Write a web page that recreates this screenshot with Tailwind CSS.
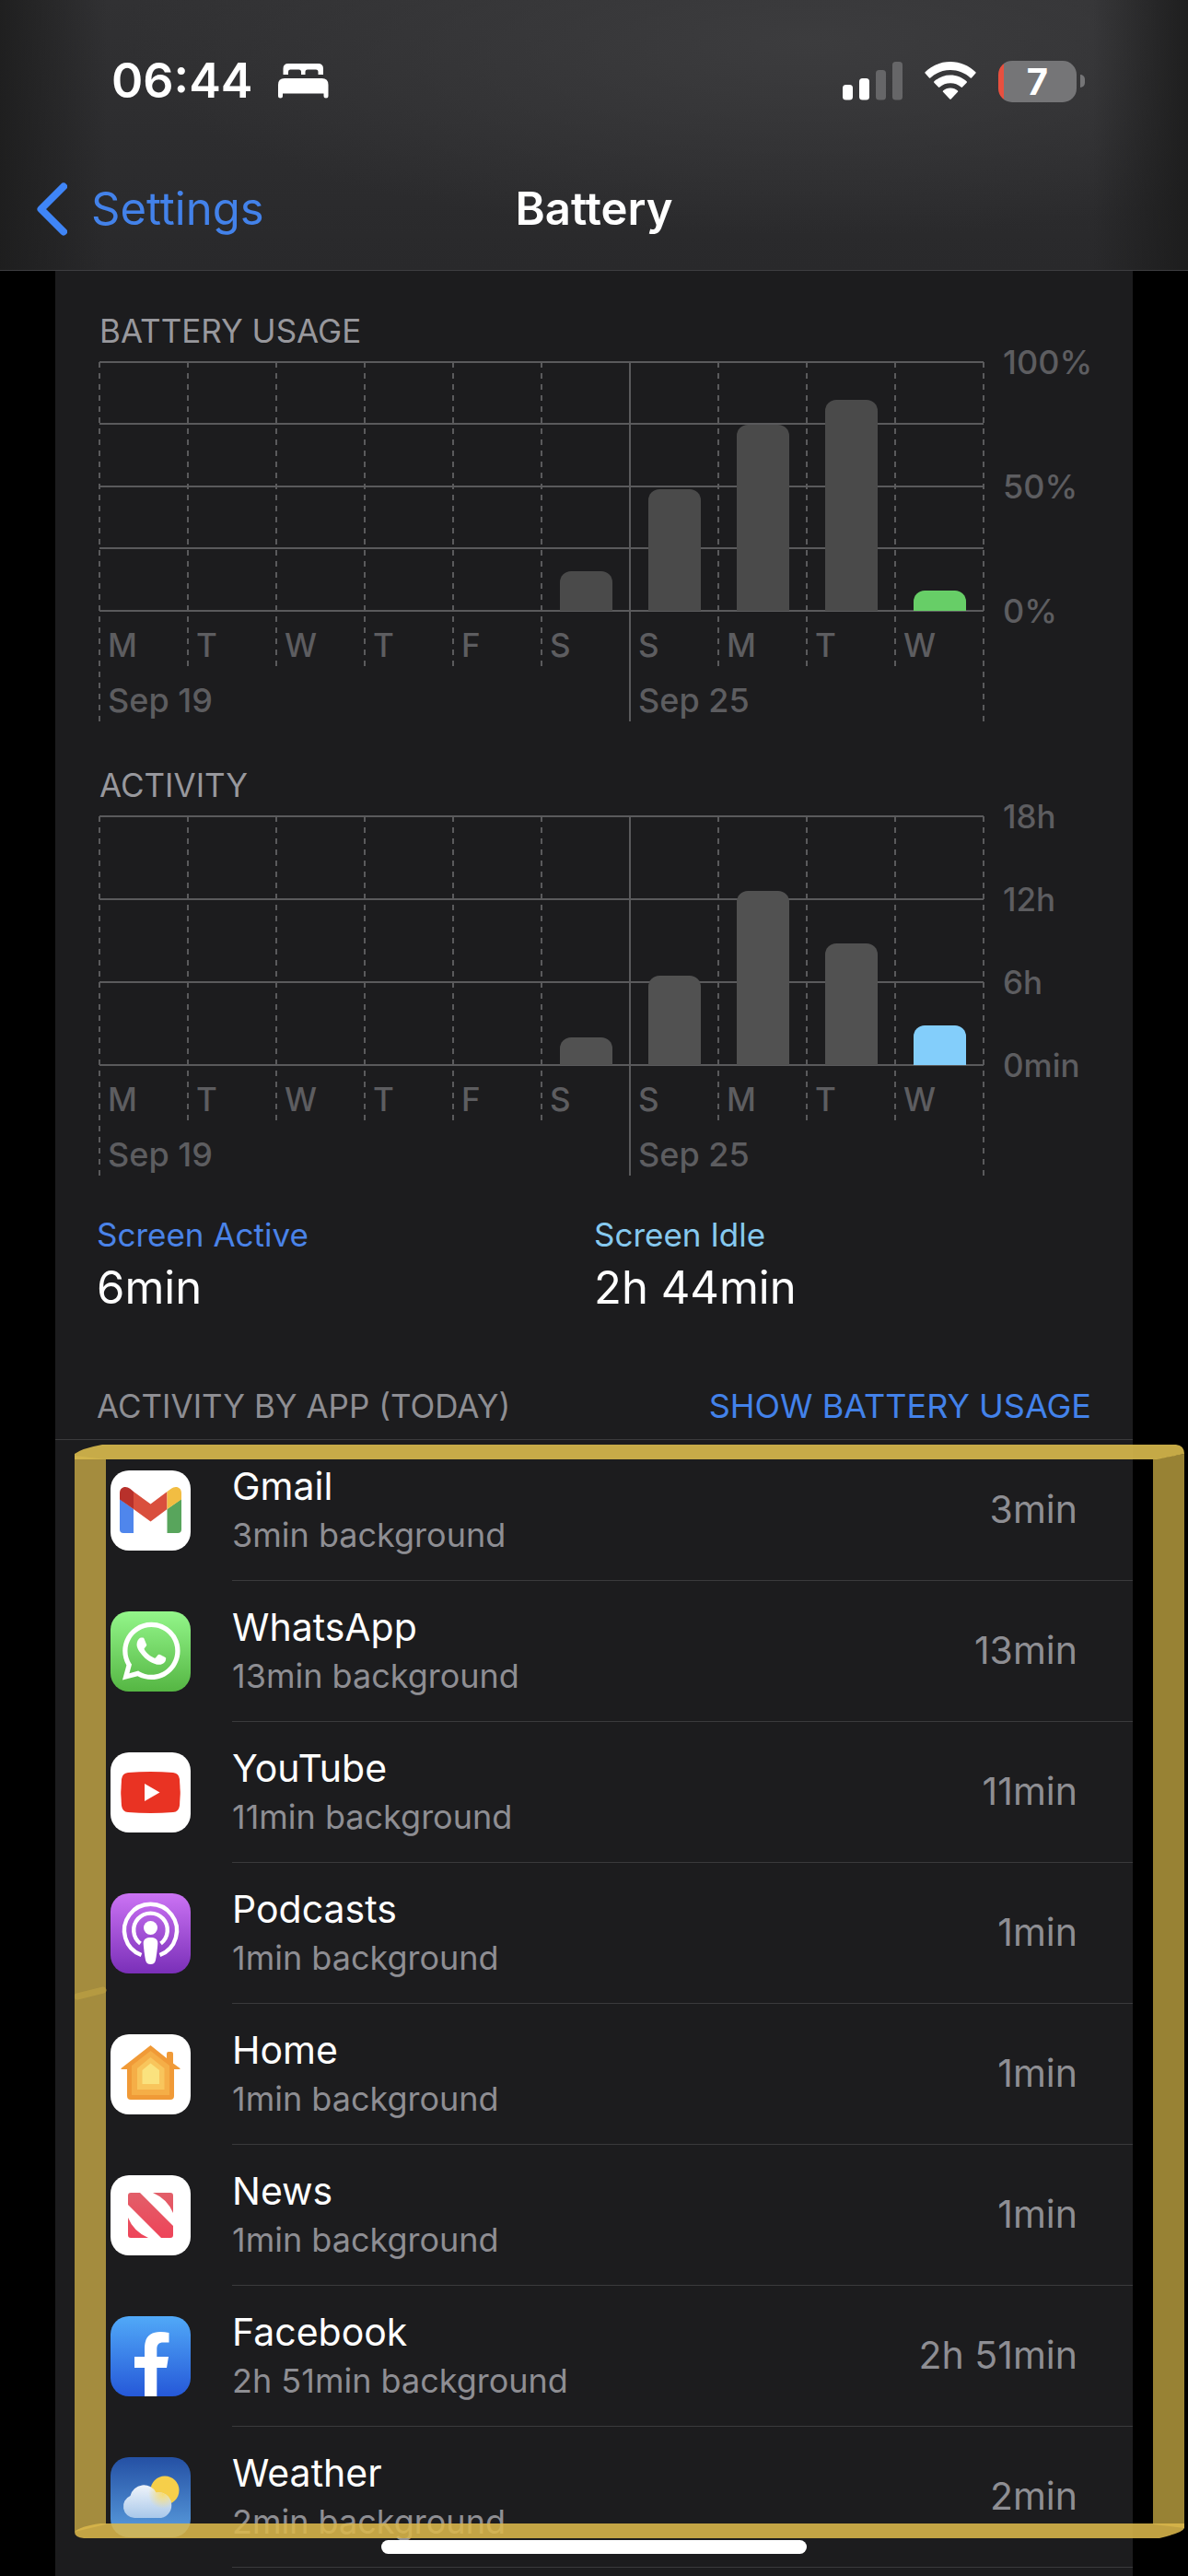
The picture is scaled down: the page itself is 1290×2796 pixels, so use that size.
<!DOCTYPE html>
<html lang="en">
<head>
  <meta charset="UTF-8" />
  <meta name="viewport" content="width=device-width, initial-scale=1.0" />
  <title>Battery</title>
  <script src="https://cdn.jsdelivr.net/npm/@tailwindcss/browser@4"></script>
</head>
<body class="bg-black text-white font-['Inter',sans-serif]">
  <div class="h-screen flex flex-col overflow-hidden">

    <!-- Status bar + nav -->
    <header class="shrink-0 border-b border-[#3d3d40] pb-[15px] bg-[linear-gradient(to_right,#1b1b1bcc,transparent_9%,transparent_92%,#1b1b1bdd),radial-gradient(ellipse_at_68%_15%,#3c3c3e,transparent_60%),linear-gradient(#313133,#29292b)]">
      <div class="h-44 flex items-center justify-between pl-[121px] pr-28">
        <div class="flex items-center gap-7">
          <span class="text-[52px] font-semibold">06:44</span>
          <svg class="w-[55px] h-[38px]" viewBox="0 0 55 38" fill="#fff">
            <path d="M5.500 12V5.500Q5.500 0 11 0H43.500Q49 0 49 5.500V12H43.500V9Q43.500 6.500 41 6.500H32Q29.500 6.500 29.500 9V12H25V9Q25 6.500 22.500 6.500H13Q11 6.500 11 9V12Z" />
            <path d="M0 35V23Q0 16 7 16H47.500Q54.500 16 54.500 23V35Q54.500 37.500 52 37.500T49.500 35V32.500H5V35Q5 37.500 2.500 37.500T0 35Z" />
          </svg>
        </div>
        <div class="flex items-center gap-6">
          <svg class="w-[65px] h-[42px]" viewBox="0 0 65 42">
            <rect x="0" y="25" width="11" height="16.500" rx="3.500" fill="#fff" />
            <rect x="18" y="18" width="11" height="23.500" rx="3.500" fill="#fff" />
            <rect x="36" y="9" width="11" height="32.500" rx="3.500" fill="#666668" />
            <rect x="54" y="0" width="11" height="41.500" rx="3.500" fill="#666668" />
          </svg>
          <svg class="w-14 h-[42px]" viewBox="0 0 56 42" fill="#fff">
            <path d="M28 0C17.500 0 8 4 .6 11.300Q0 12 .6 12.600L5 17.500Q5.600 18.200 6.300 17.500C12.300 12 19.800 9 28 9S43.700 12 49.700 17.500Q50.400 18.200 51 17.500L55.400 12.600Q56 12 55.400 11.300C48 4 38.500 0 28 0Z" />
            <path d="M28 14.500C21.300 14.500 15.200 17 10.400 21.300Q9.700 22 10.300 22.700L15 27.600Q15.600 28.300 16.400 27.600C19.600 24.800 23.600 23.300 28 23.300S36.400 24.800 39.600 27.600Q40.400 28.300 41 27.600L45.700 22.700Q46.300 22 45.600 21.300C40.800 17 34.700 14.500 28 14.500Z" />
            <path d="M28 28.500C24.900 28.500 22.200 29.600 20 31.400Q19.300 32 20 32.700L27.300 40.500Q28 41.200 28.700 40.500L36 32.700Q36.700 32 36 31.400C33.800 29.600 31.100 28.500 28 28.500Z" />
          </svg>
          <div class="flex items-center gap-1">
            <div class="w-[85px] h-[45px] rounded-[15px] bg-[linear-gradient(to_right,#e8503f_6px,#757577_6px)] text-center text-[40px] leading-[45px] font-bold">7</div>
            <div class="w-[5px] h-[14px] rounded-r-full bg-[#757577]"></div>
          </div>
        </div>
      </div>
      <nav class="h-[102px] grid grid-cols-3 items-center px-10">
        <a href="#" class="flex items-center gap-[26px] text-[49px] text-[#4382ea]">
          <svg class="w-[33px] h-[58px]" viewBox="0 0 33 58" fill="none" stroke="#3f85f7" stroke-width="8" stroke-linecap="round" stroke-linejoin="round"><path d="M29 4.500L4.500 29L29 53.500" /></svg>
          Settings
        </a>
        <h1 class="text-[49px] font-semibold text-center">Battery</h1>
      </nav>
    </header>

    <main class="relative flex-1 mx-[60px] bg-[#1c1c1e] pt-[45px]">

      <!-- Battery usage chart -->
      <section class="pl-12">
        <h2 class="text-[35px] leading-10 text-[#98989d] mb-[14px]">BATTERY USAGE</h2>
        <div class="flex gap-[21px]">
          <div class="relative flex-1 h-[390px]">
            <svg class="absolute inset-0 w-full h-full overflow-visible" stroke="#5a5a5c" stroke-width="2">
              <g>
                <line x1="0" x2="100%" y1="0" y2="0" />
                <line x1="0" x2="100%" y1="67" y2="67" />
                <line x1="0" x2="100%" y1="135" y2="135" />
                <line x1="0" x2="100%" y1="202" y2="202" />
                <line x1="0" x2="100%" y1="270" y2="270" />
                <line x1="60%" x2="60%" y1="0" y2="390" />
              </g>
              <g stroke-dasharray="6 6">
                <line x1="0" x2="0" y1="0" y2="390" />
                <line x1="10%" x2="10%" y1="0" y2="330" />
                <line x1="20%" x2="20%" y1="0" y2="330" />
                <line x1="30%" x2="30%" y1="0" y2="330" />
                <line x1="40%" x2="40%" y1="0" y2="330" />
                <line x1="50%" x2="50%" y1="0" y2="330" />
                <line x1="70%" x2="70%" y1="0" y2="330" />
                <line x1="80%" x2="80%" y1="0" y2="330" />
                <line x1="90%" x2="90%" y1="0" y2="330" />
                <line x1="100%" x2="100%" y1="0" y2="390" />
              </g>
            </svg>
            <div class="relative grid grid-cols-10 h-[270px] items-end justify-items-center">
              <div class="col-start-6 w-[57px] rounded-t-xl bg-[#4a4a4a]" style="height: 16%"></div>
              <div class="w-[57px] rounded-t-xl bg-[#4a4a4a]" style="height: 49%"></div>
              <div class="w-[57px] rounded-t-xl bg-[#4a4a4a]" style="height: 75%"></div>
              <div class="w-[57px] rounded-t-xl bg-[#4a4a4a]" style="height: 85%"></div>
              <div class="w-[57px] rounded-t-xl bg-[#67ce67]" style="height: 8%"></div>
            </div>
            <div class="relative grid grid-cols-10 pt-[17px] text-[35px] leading-10 font-medium text-[#5d5d60]">
              <span class="pl-[9px]">M</span><span class="pl-[9px]">T</span><span class="pl-[9px]">W</span><span class="pl-[9px]">T</span><span class="pl-[9px]">F</span><span class="pl-[9px]">S</span><span class="pl-[9px]">S</span><span class="pl-[9px]">M</span><span class="pl-[9px]">T</span><span class="pl-[9px]">W</span>
            </div>
            <div class="relative grid grid-cols-10 pt-5 text-[36px] leading-10 font-medium text-[#5d5d60]">
              <span class="col-span-6 pl-[9px]">Sep 19</span><span class="col-span-4 pl-[9px]">Sep 25</span>
            </div>
          </div>
          <div class="w-[141px] h-[310px] -my-5 flex flex-col justify-between text-[36px] leading-10 font-medium text-[#5d5d60]">
            <span>100%</span><span>50%</span><span>0%</span>
          </div>
        </div>
      </section>

      <!-- Activity chart -->
      <section class="pl-12 mt-[49px]">
        <h2 class="text-[35px] leading-10 text-[#98989d] mb-[14px]">ACTIVITY</h2>
        <div class="flex gap-[21px]">
          <div class="relative flex-1 h-[390px]">
            <svg class="absolute inset-0 w-full h-full overflow-visible" stroke="#5a5a5c" stroke-width="2">
              <g>
                <line x1="0" x2="100%" y1="0" y2="0" />
                <line x1="0" x2="100%" y1="90" y2="90" />
                <line x1="0" x2="100%" y1="180" y2="180" />
                <line x1="0" x2="100%" y1="270" y2="270" />
                <line x1="60%" x2="60%" y1="0" y2="390" />
              </g>
              <g stroke-dasharray="6 6">
                <line x1="0" x2="0" y1="0" y2="390" />
                <line x1="10%" x2="10%" y1="0" y2="330" />
                <line x1="20%" x2="20%" y1="0" y2="330" />
                <line x1="30%" x2="30%" y1="0" y2="330" />
                <line x1="40%" x2="40%" y1="0" y2="330" />
                <line x1="50%" x2="50%" y1="0" y2="330" />
                <line x1="70%" x2="70%" y1="0" y2="330" />
                <line x1="80%" x2="80%" y1="0" y2="330" />
                <line x1="90%" x2="90%" y1="0" y2="330" />
                <line x1="100%" x2="100%" y1="0" y2="390" />
              </g>
            </svg>
            <div class="relative grid grid-cols-10 h-[270px] items-end justify-items-center">
              <div class="col-start-6 w-[57px] rounded-t-xl bg-[#515151]" style="height: 11%"></div>
              <div class="w-[57px] rounded-t-xl bg-[#515151]" style="height: 36%"></div>
              <div class="w-[57px] rounded-t-xl bg-[#515151]" style="height: 70%"></div>
              <div class="w-[57px] rounded-t-xl bg-[#515151]" style="height: 49%"></div>
              <div class="w-[57px] rounded-t-xl bg-[#83cefb]" style="height: 16%"></div>
            </div>
            <div class="relative grid grid-cols-10 pt-[17px] text-[35px] leading-10 font-medium text-[#5d5d60]">
              <span class="pl-[9px]">M</span><span class="pl-[9px]">T</span><span class="pl-[9px]">W</span><span class="pl-[9px]">T</span><span class="pl-[9px]">F</span><span class="pl-[9px]">S</span><span class="pl-[9px]">S</span><span class="pl-[9px]">M</span><span class="pl-[9px]">T</span><span class="pl-[9px]">W</span>
            </div>
            <div class="relative grid grid-cols-10 pt-5 text-[36px] leading-10 font-medium text-[#5d5d60]">
              <span class="col-span-6 pl-[9px]">Sep 19</span><span class="col-span-4 pl-[9px]">Sep 25</span>
            </div>
          </div>
          <div class="w-[141px] h-[310px] -my-5 flex flex-col justify-between text-[35px] leading-10 font-medium text-[#5d5d60]">
            <span>18h</span><span>12h</span><span>6h</span><span>0min</span>
          </div>
        </div>
      </section>

      <section class="grid grid-cols-2 mt-11 px-[45px]">
        <div>
          <p class="text-[35px] leading-10 text-[#4a83e8]">Screen Active</p>
          <p class="mt-2 text-[49px] leading-[60px]">6min</p>
        </div>
        <div>
          <p class="text-[35px] leading-10 text-[#86c9ef]">Screen Idle</p>
          <p class="mt-2 text-[49px] leading-[60px]">2h 44min</p>
        </div>
      </section>

      <div class="flex justify-between items-center mt-[78px] pb-4 px-[45px] border-b border-[#3a3a3c] text-[35px] leading-10">
        <h2 class="text-[#8e8e93]">ACTIVITY BY APP (TODAY)</h2>
        <button type="button" class="text-[36px] text-[#4382ea]">SHOW BATTERY USAGE</button>
      </div>

      <!-- Apps -->
      <div class="relative">
        <ul class="pl-[60px]">
          <li class="flex">
            <svg class="w-[87px] h-[87px] mt-[33px] mr-[45px] shrink-0" viewBox="0 0 87 87">
              <rect width="87" height="87" rx="20" fill="#fff" />
              <path d="M10 31L25 42V68H14Q10 68 10 64Z" fill="#4f86ec" />
              <path d="M77 31L61.500 42V68H73Q77 68 77 64Z" fill="#58a55c" />
              <path d="M25 23L43.500 36.500L61.500 23V42L43.500 55.500L25 42Z" fill="#d94f3d" />
              <path d="M10 31.500V24.500C10 18 16.500 16 21.500 20L25 23V42Z" fill="#b8312b" />
              <path d="M77 31.500V24.500C77 18 70.500 16 65.500 20L61.500 23V42Z" fill="#f2bd42" />
            </svg>
            <div class="flex-1 flex items-center justify-between h-[153px] border-b border-[#3a3a3c] pr-[60px]">
              <div><p class="text-[41px] leading-[54px]">Gmail</p><p class="text-[36px] leading-[52px] text-[#8e8e93]">3min background</p></div>
              <span class="text-[41px] text-[#8e8e93]">3min</span>
            </div>
          </li>
          <li class="flex">
            <svg class="w-[87px] h-[87px] mt-[33px] mr-[45px] shrink-0" viewBox="0 0 87 87">
              <defs><linearGradient id="wa" x2="0" y2="1"><stop stop-color="#93f68a" /><stop offset="1" stop-color="#55b643" /></linearGradient></defs>
              <rect width="87" height="87" rx="20" fill="url(#wa)" />
              <path transform="translate(12.800 11.700) scale(2.620)" fill="#fff" d="M17.472 14.382c-.297-.149-1.758-.867-2.03-.967-.273-.099-.471-.148-.67.15-.197.297-.767.966-.94 1.164-.173.199-.347.223-.644.075-.297-.15-1.255-.463-2.39-1.475-.883-.788-1.48-1.761-1.653-2.059-.173-.297-.018-.458.13-.606.134-.133.298-.347.446-.52.149-.174.198-.298.298-.497.099-.198.05-.371-.025-.52-.075-.149-.669-1.612-.916-2.207-.242-.579-.487-.5-.669-.51-.173-.008-.371-.01-.57-.01-.198 0-.52.074-.792.372-.272.297-1.04 1.016-1.04 2.479 0 1.462 1.065 2.875 1.213 3.074.149.198 2.096 3.2 5.077 4.487.709.306 1.262.489 1.694.625.712.227 1.36.195 1.871.118.571-.085 1.758-.719 2.006-1.413.248-.694.248-1.289.173-1.413-.074-.124-.272-.198-.57-.347m-5.421 7.403h-.004a9.87 9.87 0 01-5.031-1.378l-.361-.214-3.741.982.998-3.648-.235-.374a9.86 9.86 0 01-1.51-5.26c.001-5.45 4.436-9.884 9.888-9.884 2.64 0 5.122 1.03 6.988 2.898a9.825 9.825 0 012.893 6.994c-.003 5.45-4.437 9.884-9.885 9.884m8.413-18.297A11.815 11.815 0 0012.05 0C5.495 0 .16 5.335.157 11.892c0 2.096.547 4.142 1.588 5.945L.057 24l6.305-1.654a11.882 11.882 0 005.683 1.448h.005c6.554 0 11.89-5.335 11.893-11.893a11.821 11.821 0 00-3.48-8.413z" />
            </svg>
            <div class="flex-1 flex items-center justify-between h-[153px] border-b border-[#3a3a3c] pr-[60px]">
              <div><p class="text-[41px] leading-[54px]">WhatsApp</p><p class="text-[36px] leading-[52px] text-[#8e8e93]">13min background</p></div>
              <span class="text-[41px] text-[#8e8e93]">13min</span>
            </div>
          </li>
          <li class="flex">
            <svg class="w-[87px] h-[87px] mt-[33px] mr-[45px] shrink-0" viewBox="0 0 87 87">
              <rect width="87" height="87" rx="20" fill="#fff" />
              <path d="M19 22Q43.500 20 68 22Q74 22.500 75 29Q76.500 43.500 75 58Q74 64.500 68 65Q43.500 67 19 65Q13 64.500 12 58Q10.500 43.500 12 29Q13 22.500 19 22Z" fill="#e93323" />
              <path d="M37 34L53.500 43.500L37 53Z" fill="#fff" />
            </svg>
            <div class="flex-1 flex items-center justify-between h-[153px] border-b border-[#3a3a3c] pr-[60px]">
              <div><p class="text-[41px] leading-[54px]">YouTube</p><p class="text-[36px] leading-[52px] text-[#8e8e93]">11min background</p></div>
              <span class="text-[41px] text-[#8e8e93]">11min</span>
            </div>
          </li>
          <li class="flex">
            <svg class="w-[87px] h-[87px] mt-[33px] mr-[45px] shrink-0" viewBox="0 0 87 87">
              <defs><linearGradient id="pod" x2="0" y2="1"><stop stop-color="#cb73f4" /><stop offset="1" stop-color="#7a2fb8" /></linearGradient></defs>
              <rect width="87" height="87" rx="20" fill="url(#pod)" />
              <g fill="none" stroke="#fff" stroke-width="4.400">
                <path d="M33.500 67A28.500 28.500 0 1 1 53.500 67" />
                <path d="M32.500 54.500A18.300 18.300 0 1 1 54.500 54.500" />
              </g>
              <circle cx="43.500" cy="37.500" r="7.500" fill="#fff" />
              <path d="M43.500 48C48 48 51.500 49.500 51.300 54.500C51 60 50 67 49 72.500Q48 77 43.500 77T38 72.500C37 67 36 60 35.700 54.500C35.500 49.500 39 48 43.500 48Z" fill="#fff" />
            </svg>
            <div class="flex-1 flex items-center justify-between h-[153px] border-b border-[#3a3a3c] pr-[60px]">
              <div><p class="text-[41px] leading-[54px]">Podcasts</p><p class="text-[36px] leading-[52px] text-[#8e8e93]">1min background</p></div>
              <span class="text-[41px] text-[#8e8e93]">1min</span>
            </div>
          </li>
          <li class="flex">
            <svg class="w-[87px] h-[87px] mt-[33px] mr-[45px] shrink-0" viewBox="0 0 87 87">
              <rect width="87" height="87" rx="20" fill="#fff" />
              <path d="M43.500 12L61 26V21Q61 19 63 19H66Q68 19 68 21V31.500L75.500 37Q76 38 75 38H69V67Q69 71 65 71H22Q18 71 18 67V38H12Q11 38 11.500 37Z" fill="#f09a37" />
              <path d="M43.500 18L64 34V66H23V34Z" fill="#f5ae47" />
              <path d="M43.500 25L58.500 37V60H29V37Z" fill="#f8c55c" />
              <path d="M43.500 31.500L53 39V54H34.500V39Z" fill="#fae27e" />
            </svg>
            <div class="flex-1 flex items-center justify-between h-[153px] border-b border-[#3a3a3c] pr-[60px]">
              <div><p class="text-[41px] leading-[54px]">Home</p><p class="text-[36px] leading-[52px] text-[#8e8e93]">1min background</p></div>
              <span class="text-[41px] text-[#8e8e93]">1min</span>
            </div>
          </li>
          <li class="flex">
            <svg class="w-[87px] h-[87px] mt-[33px] mr-[45px] shrink-0" viewBox="0 0 87 87">
              <defs><linearGradient id="news" gradientUnits="userSpaceOnUse" x1="0" y1="19" x2="0" y2="68"><stop stop-color="#e25f69" /><stop offset="1" stop-color="#ee4459" /></linearGradient></defs>
              <rect width="87" height="87" rx="20" fill="#fff" />
              <g fill="url(#news)">
                <path d="M19 22Q19 19 22 19H32L68 55V65Q68 68 65 68H55L19 32Z" />
                <path d="M46 19H65Q68 19 68 22V41Q62 26 46 19Z" />
                <path d="M19 46Q25 61 41 68H22Q19 68 19 65Z" />
              </g>
            </svg>
            <div class="flex-1 flex items-center justify-between h-[153px] border-b border-[#3a3a3c] pr-[60px]">
              <div><p class="text-[41px] leading-[54px]">News</p><p class="text-[36px] leading-[52px] text-[#8e8e93]">1min background</p></div>
              <span class="text-[41px] text-[#8e8e93]">1min</span>
            </div>
          </li>
          <li class="flex">
            <svg class="w-[87px] h-[87px] mt-[33px] mr-[45px] shrink-0" viewBox="0 0 87 87">
              <defs><linearGradient id="fb" x2="0" y2="1"><stop stop-color="#51a9f8" /><stop offset="1" stop-color="#2558d8" /></linearGradient></defs>
              <rect width="87" height="87" rx="20" fill="url(#fb)" />
              <path d="M37 87V56H26V44H37V35C37 22.500 43 17 54 17Q59 17 63.500 18V28.500H57.500C52 28.500 50.300 31 50.300 36V44H63L61 56H50.300V87Z" fill="#fff" />
            </svg>
            <div class="flex-1 flex items-center justify-between h-[153px] border-b border-[#3a3a3c] pr-[60px]">
              <div><p class="text-[41px] leading-[54px]">Facebook</p><p class="text-[36px] leading-[52px] text-[#8e8e93]">2h 51min background</p></div>
              <span class="text-[41px] text-[#8e8e93]">2h 51min</span>
            </div>
          </li>
          <li class="flex">
            <svg class="w-[87px] h-[87px] mt-[33px] mr-[45px] shrink-0" viewBox="0 0 87 87">
              <defs>
                <linearGradient id="sky" x2="0" y2="1"><stop stop-color="#2450a4" /><stop offset="1" stop-color="#5b9fdf" /></linearGradient>
                <linearGradient id="cloud" gradientUnits="userSpaceOnUse" x1="0" y1="28" x2="0" y2="66"><stop stop-color="#f3f6fb" /><stop offset="1" stop-color="#a9c8ea" /></linearGradient>
                <radialGradient id="glow" gradientUnits="userSpaceOnUse" cx="57" cy="40" r="16"><stop stop-color="#f7dc72" /><stop offset="1" stop-color="#f7dc72" stop-opacity="0" /></radialGradient>
                <path id="cloudShape" d="M26 66A12.500 12.500 0 0 1 21.500 42A15 15 0 0 1 49.500 38.500A14 14 0 1 1 55 66Z" />
              </defs>
              <rect width="87" height="87" rx="20" fill="url(#sky)" />
              <circle cx="59" cy="36" r="15.500" fill="#f6cf4a" />
              <use href="#cloudShape" fill="url(#cloud)" />
              <use href="#cloudShape" fill="url(#glow)" />
            </svg>
            <div class="flex-1 flex items-center justify-between h-[153px] border-b border-[#3a3a3c] pr-[60px]">
              <div><p class="text-[41px] leading-[54px]">Weather</p><p class="text-[36px] leading-[52px] text-[#8e8e93]">2min background</p></div>
              <span class="text-[41px] text-[#8e8e93]">2min</span>
            </div>
          </li>
        </ul>

        <!-- Yellow marker box drawn over the list -->
        <svg class="absolute top-[5px] left-[21px] w-[calc(100%+35px)] h-[1188px]" viewBox="0 0 1205 1188" preserveAspectRatio="none">
          <path d="M0 12L34 16V1172L0 1180Z" fill="#d2b14a" fill-opacity=".75" />
          <path d="M1171 16L1205 10V1176L1171 1172Z" fill="#cdb046" fill-opacity=".74" />
          <path d="M30 0H1196Q1205 1 1205 10L1175 16H0V10Q8 4 30 0Z" fill="#d6b74c" fill-opacity=".92" />
          <path d="M28 1171H1205V1176Q1203 1181 1178 1187H10Q0 1186 0 1180Q6 1174 28 1171Z" fill="#dbb74b" fill-opacity=".88" />
          <path d="M3 599L31 592" stroke="#bda043" stroke-width="7" stroke-linecap="round" opacity=".7" />
        </svg>
      </div>
    </main>
  </div>

  <!-- Home indicator -->
  <div class="fixed bottom-6 left-1/2 -translate-x-1/2 w-[462px] h-[15px] rounded-full bg-white"></div>
</body>
</html>
